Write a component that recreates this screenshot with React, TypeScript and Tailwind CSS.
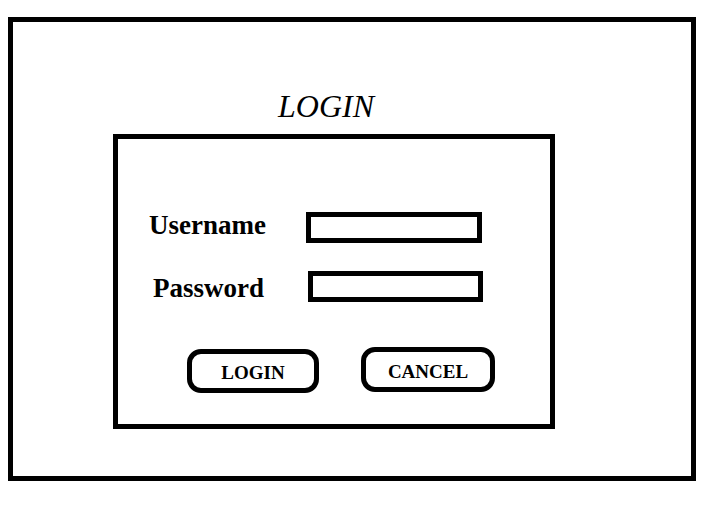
import React from "react";

export default function App() {
  const serif = { fontFamily: '"Liberation Serif", "Times New Roman", serif' };
  return (
    <div className="w-[724px] h-[515px] bg-white pt-[17px] pl-[8px]" style={serif}>
      <div className="w-[688px] h-[464px] border-[5px] border-black flex flex-col pl-[100px]">
        <div className="mt-[68px] ml-[165px] text-[32px] leading-[32px] italic text-black">LOGIN</div>
        <div className="mt-[12px] w-[442px] h-[295px] border-[5px] border-black flex flex-col">
          <div className="mt-[71px] flex items-start">
            <div className="ml-[31px] mt-[2px] w-[157px] text-[27px] leading-[27px] font-bold text-black">Username</div>
            <div className="mt-[2px] w-[176px] h-[31px] border-[5px] border-black" />
          </div>
          <div className="mt-[28px] flex items-start">
            <div className="ml-[35px] mt-[4px] w-[155px] text-[27px] leading-[27px] font-bold text-black">Password</div>
            <div className="w-[175px] h-[31px] border-[5px] border-black" />
          </div>
          <div className="mt-[45px] flex items-start">
            <div className="ml-[69px] mt-[2px] w-[132px] h-[44px] border-[5px] border-black rounded-[14px] flex items-center justify-center pt-[3px] text-[19px] leading-[19px] font-bold text-black">
              LOGIN
            </div>
            <div className="ml-[42px] w-[134px] h-[45px] border-[5px] border-black rounded-[14px] flex items-center justify-center pt-[3px] text-[19px] leading-[19px] font-bold text-black">
              CANCEL
            </div>
          </div>
        </div>
      </div>
    </div>
  );
}
